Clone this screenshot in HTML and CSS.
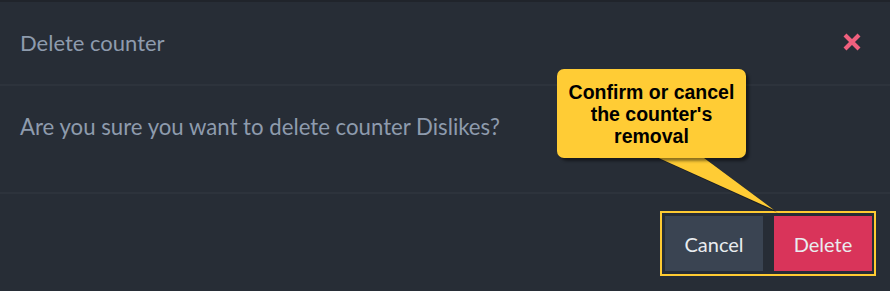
FILE: index.html
```html
<!DOCTYPE html>
<html>
<head>
<meta charset="utf-8">
<link rel="stylesheet" href="styles.css">
</head>
<body>
<div class="modal">
  <div class="modal-header">
    <h4 class="title">Delete counter</h4>
    <button class="close" aria-label="Close">
      <svg width="20" height="20" viewBox="0 0 20 20"><path d="M3 3 L17 17 M17 3 L3 17" stroke="#f0607e" stroke-width="4.2" stroke-linecap="butt"/></svg>
    </button>
  </div>
  <div class="modal-body">
    <p class="question">Are you sure you want to delete counter Dislikes?</p>
  </div>
  <div class="modal-footer">
    <div class="highlight">
      <button class="btn btn-cancel">Cancel</button>
      <button class="btn btn-delete">Delete</button>
    </div>
  </div>
  <div class="callout">
    <svg class="callout-tail" width="140" height="70" viewBox="0 0 140 70">
      <polygon points="3,2 51,2 126,58" fill="rgba(0,0,0,0.35)"/>
      <polygon points="0,0 48,0 122,55" fill="#ffcc35"/>
    </svg>
    <div class="callout-box">Confirm or cancel the counter's removal</div>
  </div>
</div>
</body>
</html>
```
FILE: styles.css
```css
* { box-sizing: border-box; }
html, body { margin: 0; padding: 0; }
body {
  width: 890px;
  height: 291px;
  background: #272d36;
  font-family: Lato, "Open Sans", sans-serif;
  overflow: hidden;
}
.modal {
  position: relative;
  width: 890px;
  height: 291px;
  background: #272d36;
  border-top: 2px solid #20242b;
}
.modal-header {
  height: 84px;
  display: flex;
  align-items: center;
  justify-content: space-between;
  padding: 0 28px 2px 20px;
  border-bottom: 2px solid #2d333c;
}
.title {
  margin: 0;
  font-weight: 400;
  font-size: 22px;
  color: #8e9bad;
}
.close {
  background: none;
  border: 0;
  padding: 0;
  width: 20px;
  height: 20px;
  display: flex;
}
.modal-body {
  height: 108px;
  display: flex;
  align-items: center;
  padding: 0 20px 25px;
  border-bottom: 2px solid #2d333c;
}
.question {
  margin: 0;
  font-size: 22.2px;
  color: #8e9bad;
}
.modal-footer {
  display: flex;
  justify-content: flex-end;
  padding: 17px 14px 0 0;
}
.highlight {
  display: flex;
  gap: 11px;
  border: 2px solid #ffcb32;
  padding: 3px 2px 3px 3px;
}
.btn {
  width: 98px;
  height: 55px;
  border: 0;
  font-family: Lato, "Open Sans", sans-serif;
  font-size: 20px;
  color: #e9ecef;
  padding: 0;
}
.btn-cancel { background: #3a4452; }
.btn-delete { background: #d9345a; }
.callout {
  position: absolute;
  left: 557px;
  top: 67px;
}
.callout-box {
  position: relative;
  width: 189px;
  height: 89px;
  background: #ffcc35;
  border-radius: 7px;
  box-shadow: 3px 3px 3px rgba(0,0,0,0.45);
  font-family: "Liberation Sans", Arial, sans-serif;
  font-weight: 700;
  font-size: 19.5px;
  line-height: 22px;
  color: #000;
  text-align: center;
  padding: 12px 4px 0;
}
.callout-tail {
  position: absolute;
  left: 95px;
  top: 86px;
}
```
